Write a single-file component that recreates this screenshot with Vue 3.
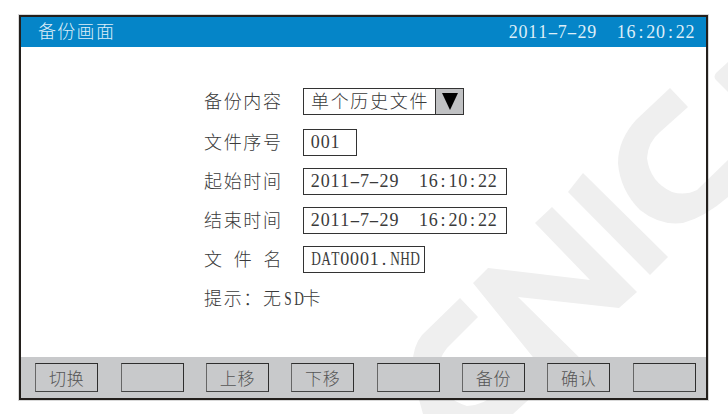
<script setup>
const rows = [
  { label: '文件序号', value: '001', cls: 'w-num' },
  { label: '起始时间', value: '2011-7-29  16:10:22', cls: 'w-time' },
  { label: '结束时间', value: '2011-7-29  16:20:22', cls: 'w-time' },
  { label: '文 件 名', value: 'DAT0001.NHD', cls: 'w-file' }
]
const keys = ['切换', '', '上移', '下移', '', '备份', '确认', '']

// The display's latin text is half-width: every character sits in one fixed cell.
const cellClass = (c) => {
  if (c === '-') return 'cell dash'
  if (c >= 'A' && c <= 'Z') return 'cell cap'
  return 'cell'
}
const cells = (text) => [...text].map((c) => ({ c, cls: cellClass(c) }))
</script>

<template>
  <div class="page">
    <svg class="mark" width="728" height="414" viewBox="0 0 728 414" aria-hidden="true">
      <g fill="#efefef">
        <path d="M583 173 L668 257 L650 275 L568 192 Z" />
        <path d="M552 207 L637 292 L619 308 L518 297 L593 371 L566 398 L473 283 L488 268 L590 280 L535 223 Z" />
        <path d="M460 298 L478 317 L447 348 Q436 362 438 378 Q442 398 467 406 Q485 405 497 392 L520 366 L548 382 L513 414 L423 414 L415 385 Q408 352 422 335 Z" />
        <path d="M670 88 L636 120 Q618 140 618 163 Q620 190 640 210 Q660 226 683 223 Q705 217 728 197 L728 160 L697 190 Q685 196 672 192 Q650 182 647 158 Q648 142 660 132 L688 107 Z" />
        <path d="M728 62 L716 73 Q713 77 716 80 L728 92 Z" />
      </g>
    </svg>
    <div class="frame">
      <header class="title">
        <span class="title-name">备份画面</span>
        <span class="title-clock"><span v-for="(x, i) in cells('2011-7-29  16:20:22')" :key="i" :class="x.cls">{{ x.c }}</span></span>
      </header>
      <main class="body">
        <div class="row first">
          <span class="label">备份内容</span>
          <div class="select">
            <span class="select-text">单个历史文件</span>
            <span class="select-btn"><i class="tri"></i></span>
          </div>
        </div>
        <div v-for="r in rows" :key="r.label" class="row">
          <span class="label">{{ r.label }}</span>
          <span class="field" :class="r.cls"><span v-for="(x, i) in cells(r.value)" :key="i" :class="x.cls">{{ x.c }}</span></span>
        </div>
        <div class="row hint"><span class="hint-text">提示&#xFF1A;无<span v-for="(x, i) in cells('SD')" :key="i" :class="x.cls">{{ x.c }}</span>卡</span></div>
      </main>
      <footer class="keys">
        <button v-for="(k, i) in keys" :key="i" class="key" type="button">{{ k }}</button>
      </footer>
    </div>
  </div>
</template>

<style>
html, body { margin: 0; background: #fff; }
</style>

<style scoped>
.page {
  position: relative;
  width: 728px;
  height: 414px;
  overflow: hidden;
  background: #fff;
  padding: 15px 20px 14px 19px;
  box-sizing: border-box;
  font-family: "Liberation Serif", "Noto Sans CJK SC", serif;
  font-weight: 300;
  color: #3a3a3a;
}
.mark { position: absolute; left: 0; top: 0; }
.frame {
  position: relative;
  height: 385px;
  box-sizing: border-box;
  border: 2px solid #231f1c;
  box-shadow: 0 0 0 1px rgba(0, 0, 0, 0.15);
  display: flex;
  flex-direction: column;
}
.title {
  height: 30px;
  flex: none;
  background: #0585c8;
  color: #dceef8;
  font-size: 18px;
  line-height: 30px;
  display: flex;
  justify-content: space-between;
  padding: 0 11px 0 17px;
}
.title-name { letter-spacing: 1.3px; }
.title-clock { white-space: pre; }
.cell {
  display: inline-block;
  width: 9.84px;
  text-align: center;
  white-space: pre;
  font-family: "Liberation Serif", serif;
  font-size: 18px;
  letter-spacing: 0;
}
.dash { transform: scaleX(1.8); }
.cap { transform: scaleX(0.74); }
.body {
  flex: 1;
  padding: 41px 0 0 183px;
}
.row {
  display: flex;
  align-items: center;
  height: 27px;
  margin-bottom: 12px;
  font-size: 18px;
  letter-spacing: 1.68px;
}
.first { margin-bottom: 14px; }
.label,
.select-text,
.hint-text {
  font-family: "Noto Sans CJK SC", sans-serif;
  line-height: 25px;
}
.label { width: 99px; flex: none; word-spacing: 4.4px; padding-bottom: 3px; }
.select {
  display: flex;
  width: 161px;
  height: 27px;
  box-sizing: border-box;
  border: 1px solid #333;
}
.select-text { flex: 1; padding-left: 7px; margin-top: -1px; }
.select-btn {
  width: 27px;
  background: #c0c1c3;
  border-left: 1px solid #333;
  display: flex;
  align-items: center;
  justify-content: center;
}
.tri {
  width: 0;
  height: 0;
  border-left: 8px solid transparent;
  border-right: 8px solid transparent;
  border-top: 17px solid #000;
}
.field {
  height: 27px;
  box-sizing: border-box;
  border: 1px solid #333;
  padding-left: 6.4px;
  line-height: 25px;
  white-space: pre;
  letter-spacing: 0;
}
.w-num { width: 54px; }
.w-time { width: 204px; }
.w-file { width: 122px; }
.keys {
  height: 41px;
  flex: none;
  background: #c8c9cb;
  display: flex;
  gap: 22.33px;
  padding: 6px 0 0 14.3px;
  box-sizing: border-box;
}
.key {
  width: 63px;
  height: 29px;
  box-sizing: border-box;
  border: 1px solid;
  border-color: #2e2e2e #2e2e2e #444 #666;
  background: #c8c9cb;
  padding: 0;
  font-family: "Noto Sans CJK SC", sans-serif;
  font-weight: 300;
  font-size: 17px;
  letter-spacing: 0.8px;
  color: #555;
}
</style>
